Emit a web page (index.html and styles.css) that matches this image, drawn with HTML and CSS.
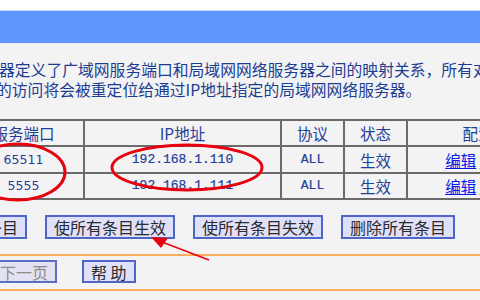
FILE: index.html
```html
<!DOCTYPE html>
<html lang="zh-CN">
<head>
<meta charset="utf-8">
<title>虚拟服务器</title>
<link rel="stylesheet" href="styles.css">
</head>
<body>
<div class="page">
  <div class="topbar"></div>
  <div class="banner"></div>
  <p class="desc">
    <span class="line l1">器定义了广域网服务端口和局域网网络服务器之间的映射关系，所有对</span>
    <span class="line l2">的访问将会被重定位给通过IP地址指定的局域网网络服务器。</span>
  </p>
  <table class="vs">
    <colgroup>
      <col class="c-port"><col class="c-ip"><col class="c-proto"><col class="c-state"><col class="c-cfg">
    </colgroup>
    <tr class="head"><th>服务端口</th><th>IP地址</th><th>协议</th><th>状态</th><th>配置</th></tr>
    <tr class="r1"><td class="num">65511</td><td class="mono">192.168.1.110</td><td class="mono">ALL</td><td>生效</td><td class="cfg"><a href="#">编辑</a> <a href="#">删除</a></td></tr>
    <tr class="r2"><td class="num">5555</td><td class="mono">192.168.1.111</td><td class="mono">ALL</td><td>生效</td><td class="cfg"><a href="#">编辑</a> <a href="#">删除</a></td></tr>
  </table>
  <div class="actions">
    <button class="btn">添加新条目</button>
    <button class="btn">使所有条目生效</button>
    <button class="btn">使所有条目失效</button>
    <button class="btn">删除所有条目</button>
  </div>
  <div class="rule"></div>
  <div class="nav">
    <button class="btn off">上一页</button>
    <button class="btn off">下一页</button>
    <button class="btn">帮 助</button>
  </div>
  <div class="rule"></div>
  <svg class="marks" width="480" height="300" viewBox="0 0 480 300">
    <ellipse cx="18" cy="172" rx="47" ry="28" fill="none" stroke="#e8000e" stroke-width="3"/>
    <ellipse cx="187" cy="167.5" rx="75" ry="22.5" fill="none" stroke="#e8000e" stroke-width="3"/>
    <line x1="209" y1="260" x2="162" y2="242" stroke="#e8000e" stroke-width="1.5"/>
    <polygon points="151,237 168,238 161,248" fill="#e8000e"/>
  </svg>
</div>
</body>
</html>
```

FILE: styles.css
```css
* { box-sizing: border-box; }
html, body {
  margin: 0;
  padding: 0;
  background: #f3f3f3;
}
.page {
  position: relative;
  width: 480px;
  height: 300px;
  overflow: hidden;
  background: #f3f3f3;
  font-family: "Noto Sans CJK SC", "Noto Sans", sans-serif;
}
.topbar {
  height: 10px;
  background: #ffffff;
}
.banner {
  height: 34px;
  background: #6097ff;
  border-top: 1px solid #c9d9ff;
  border-bottom: 1px solid #e4ebff;
}
.desc {
  margin: 16px 0 0;
  font-size: 15.8px;
  line-height: 20px;
  color: #1d3d93;
  white-space: nowrap;
}
.line { display: block; }
.l1 { margin-left: -1px; }
.l2 { margin-left: -4px; }

.vs {
  margin: 19px 0 0 -38px;
  border-collapse: collapse;
  table-layout: fixed;
  width: 586px;
  font-size: 15.5px;
  color: #1f4099;
}
.c-port { width: 121px; }
.c-ip { width: 197px; }
.c-proto { width: 63px; }
.c-state { width: 63px; }
.c-cfg { width: 142px; }
.vs th, .vs td {
  border: 2px solid #6b6b6b;
  padding: 0;
  text-align: center;
  font-weight: normal;
  line-height: 20px;
  white-space: nowrap;
}
.head th { height: 26px; }
.r1 td { height: 27px; }
.r2 td { height: 26px; }
.num {
  font-family: "DejaVu Sans", sans-serif;
  font-size: 12.5px;
}
.mono {
  font-family: "Liberation Mono", monospace;
  font-size: 13px;
  -webkit-text-stroke: 0.2px #1f4099;
}
.cfg a {
  color: #0a14e6;
  text-decoration: underline;
}

.actions {
  display: flex;
  gap: 18px;
  margin: 15px 0 0 -71px;
}
.btn {
  height: 24px;
  padding: 0 7px;
  margin: 0;
  background: #dfe0fa;
  border: 2px solid #5066c6;
  border-radius: 0;
  font-family: "Noto Sans CJK SC", "Noto Sans", sans-serif;
  font-size: 16px;
  line-height: 20px;
  color: #2a2a2a;
  white-space: nowrap;
}
.btn.off {
  color: #8c8c8c;
  background: #e2e2f3;
  border-color: #5a6ec4;
}
.rule {
  height: 2px;
  background: #ffad5e;
  margin-top: 15px;
}
.nav {
  display: flex;
  gap: 25px;
  margin: 4px 0 0 -100px;
}
.nav .btn { height: 23px; }
.nav + .rule { margin-top: 6px; }

.marks {
  position: absolute;
  left: 0;
  top: 0;
  pointer-events: none;
}
```
